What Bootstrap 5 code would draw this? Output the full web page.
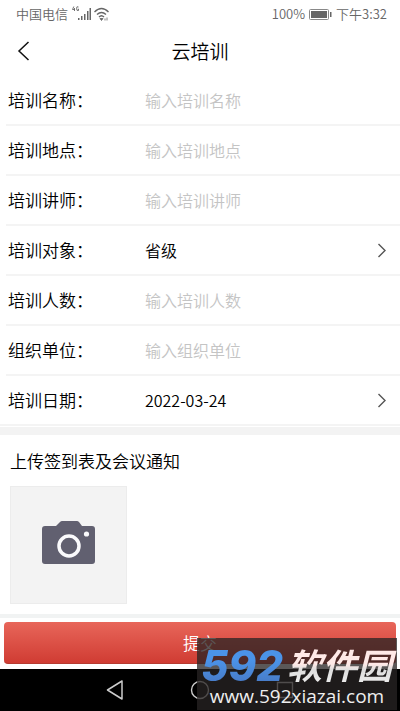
<!DOCTYPE html>
<html lang="zh-CN">
<head>
<meta charset="utf-8">
<meta name="viewport" content="width=device-width, initial-scale=1">
<title>云培训</title>
<link href="https://cdn.jsdelivr.net/npm/bootstrap@5.3.0/dist/css/bootstrap.min.css" rel="stylesheet">
<style>
  body { font-family: "Noto Sans CJK SC", sans-serif; font-weight: 350; color: #000; background: #fff; }
  .status { height: 28px; padding: 0 13px 0 16px; font-size: 13px; line-height: 28px; color: #666; }
  .title-bar { height: 48px; padding: 0 16px 2px; }
  .title-bar h1 { font-size: 19px; line-height: 28px; font-weight: 350; }
  .side { width: 24px; }
  .field { height: 50px; margin-left: 6px; padding: 0 13px 0 2px; border-bottom: 2px solid #f4f4f4; }
  .field-last { margin-left: 0; padding-left: 8px; }
  .field label { width: 137px; font-size: 17px; line-height: 24px; }
  .field input, .field select { font-size: 16px; line-height: 24px; font-weight: 350; color: #000; appearance: none; outline: 0; min-width: 0; }
  .field input::placeholder { color: #c4c4c4; opacity: 1; }
  .band { height: 8px; margin-top: 1px; background: #f3f3f3; }
  .upload { padding: 14px 10px 10px; }
  .upload h2 { font-size: 17px; line-height: 24px; font-weight: 350; margin-bottom: 13px; }
  .photo { width: 117px; height: 118px; background: #f3f3f3; border: 1px solid #ececec; }
  .submit-bar { border-top: 4px solid #f1f3f3; padding: 4px 4px 5px; }
  .submit { height: 42px; font-size: 17px; font-weight: 350; color: #fff; border-radius: 4px; border-bottom: 1px solid #b53a30; background: linear-gradient(#e8665a, #d03c33); }
  .system-nav { height: 42px; background: #000; gap: 66px; }
  .watermark { right: 3px; bottom: 1px; width: 200px; height: 72px; background: rgba(40, 35, 35, .76); }
  .brand { height: 47px; padding: 9px 0 0 4px; line-height: 38px; font-style: italic; }
  .brand span { color: transparent; background-clip: text; -webkit-background-clip: text; }
  .brand-num { font-family: Inter, sans-serif; font-size: 42px; font-weight: 800; padding-right: 4px; background-image: linear-gradient(#4b93e8 35%, #4779c4); }
  .brand-name { font-size: 35px; line-height: 34px; font-weight: 700; padding-right: 6px; background-image: linear-gradient(#ffe9e7 45%, #ddd 60%, #eee); }
  .site { font-family: "Open Sans", sans-serif; font-size: 19px; line-height: 22px; font-weight: 500; color: #eee; }
</style>
<script src="https://cdn.jsdelivr.net/npm/bootstrap@5.3.0/dist/js/bootstrap.bundle.min.js"></script>
</head>
<body>
<div class="position-relative d-flex flex-column">
  <div class="status d-flex justify-content-between">
    <div class="d-flex align-items-center">
      <span>中国电信</span>
      <svg class="ms-1" width="40" height="16" viewBox="0 0 40 16" aria-hidden="true">
        <path d="M1.800.5.500 3.500h2.500M2.500 2v3M6.500 1Q4.500-.2 4.500 2.500T6.500 4.500V3H5.700" fill="none" stroke="#666" stroke-width=".9"/>
        <path d="M6 12h1.500v2H6zM9 10h1.500v4H9zM12 8h1.500v6H12zM15 5h1.500v9H15zM17.500 2H19v12h-1.500z" fill="#666"/>
        <g fill="none" stroke="#666" stroke-width="1.400"><path d="M22.500 6q7-7 14 0M25 8.500q4.500-4 9 0M27 11q2.500-2.500 5 0"/></g>
        <path d="m28 12.500 1.500 2 1.500-2zM33 12.500v2M35 11.500v3" fill="#666" stroke="#666" stroke-width=".8"/>
      </svg>
    </div>
    <div class="d-flex align-items-center gap-1">
      <span>100%</span>
      <svg width="23" height="11" viewBox="0 0 23 11" aria-hidden="true"><rect x=".5" y=".5" width="19" height="10" rx="1" fill="none" stroke="#888"/><path d="M2 2h16v7H2zM21 3h1.500v5H21z" fill="#666"/></svg>
      <span>下午3:32</span>
    </div>
  </div>
  <header class="title-bar d-flex align-items-center justify-content-between">
    <button type="button" class="side btn p-0 border-0 d-flex" aria-label="返回"><svg width="14" height="20" viewBox="0 0 14 20"><path d="M12.500 1 3 10l9.500 9" fill="none" stroke="#111" stroke-width="1.500"/></svg></button>
    <h1 class="m-0">云培训</h1>
    <span class="side"></span>
  </header>
  <form>
    <div class="field d-flex align-items-center"><label for="name">培训名称：</label><input id="name" class="flex-grow-1 border-0 p-0 bg-transparent" type="text" placeholder="输入培训名称"></div>
    <div class="field d-flex align-items-center"><label for="place">培训地点：</label><input id="place" class="flex-grow-1 border-0 p-0 bg-transparent" type="text" placeholder="输入培训地点"></div>
    <div class="field d-flex align-items-center"><label for="teacher">培训讲师：</label><input id="teacher" class="flex-grow-1 border-0 p-0 bg-transparent" type="text" placeholder="输入培训讲师"></div>
    <div class="field d-flex align-items-center"><label for="target">培训对象：</label><select id="target" class="flex-grow-1 border-0 p-0 bg-transparent"><option>省级</option></select><svg width="10" height="15" viewBox="0 0 10 15" aria-hidden="true"><path d="m1.500 1 6.500 6.500L1.500 14" fill="none" stroke="#555" stroke-width="1.400"/></svg></div>
    <div class="field d-flex align-items-center"><label for="count">培训人数：</label><input id="count" class="flex-grow-1 border-0 p-0 bg-transparent" type="text" placeholder="输入培训人数"></div>
    <div class="field d-flex align-items-center"><label for="org">组织单位：</label><input id="org" class="flex-grow-1 border-0 p-0 bg-transparent" type="text" placeholder="输入组织单位"></div>
    <div class="field field-last d-flex align-items-center"><label for="date">培训日期：</label><input id="date" class="flex-grow-1 border-0 p-0 bg-transparent" type="text" value="2022-03-24"><svg width="10" height="15" viewBox="0 0 10 15" aria-hidden="true"><path d="m1.500 1 6.500 6.500L1.500 14" fill="none" stroke="#555" stroke-width="1.400"/></svg></div>
    <div class="band"></div>
    <section class="upload">
      <h2>上传签到表及会议通知</h2>
      <button type="button" class="photo btn rounded-0 p-0 d-flex align-items-center justify-content-center" aria-label="拍照上传">
        <svg class="mb-1" width="54" height="44" viewBox="0 0 54 44"><path d="M3 5h11l4-4q1-1 2-1h15q1 0 2 1l3 4h10q3 0 3 3v32q0 3-3 3H3q-3 0-3-3V8q0-3 3-3z" fill="#616070"/><circle cx="27" cy="25" r="10" fill="none" stroke="#fafafc" stroke-width="3.500"/><circle cx="44.500" cy="13" r="2.600" fill="#fafafc"/></svg>
      </button>
    </section>
    <div class="submit-bar"><button type="submit" class="submit btn w-100 p-0 border-start-0 border-end-0 border-top-0">提交</button></div>
  </form>
  <nav class="system-nav d-flex align-items-center justify-content-center" aria-label="系统导航">
    <svg width="18" height="20" viewBox="0 0 18 20"><path d="M16 1v18L1.500 10z" fill="none" stroke="#ccc" stroke-width="1.500" stroke-linejoin="round"/></svg>
    <svg width="20" height="20" viewBox="0 0 20 20"><circle cx="10" cy="10" r="8.500" fill="none" stroke="#ccc" stroke-width="1.400"/></svg>
    <svg width="18" height="20" viewBox="0 0 18 20"><path d="M1.500 2.500h15v15h-15z" fill="none" stroke="#ccc" stroke-width="1.400"/></svg>
  </nav>
  <div class="watermark position-absolute">
    <div class="brand d-flex text-nowrap"><span class="brand-num">592</span><span class="brand-name">软件园</span></div>
    <div class="site text-center">www.592xiazai.com</div>
  </div>
</div>
</body>
</html>
